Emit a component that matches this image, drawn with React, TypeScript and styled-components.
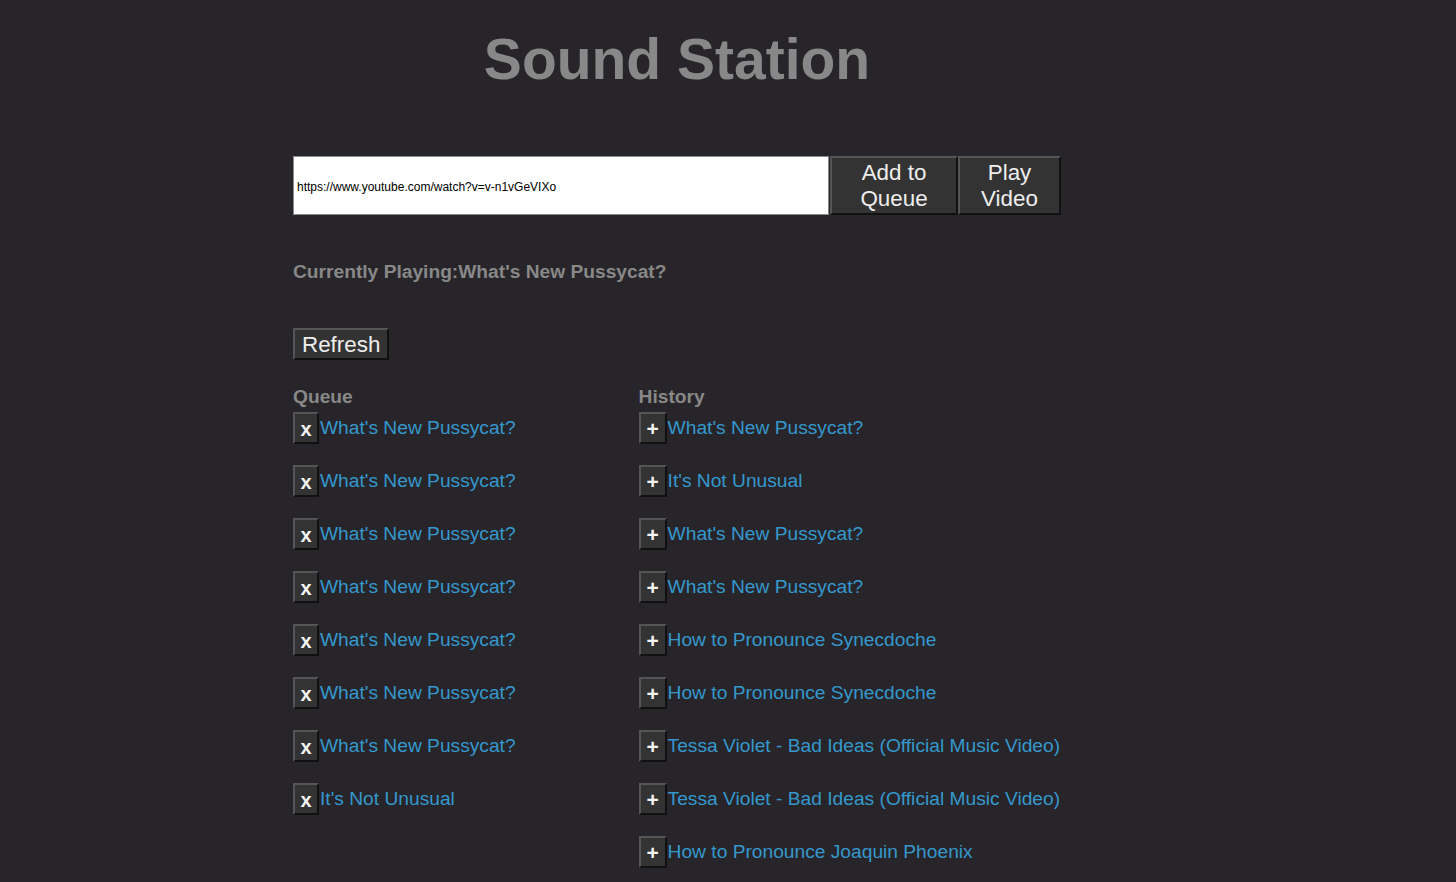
import React from "react";
import styled, { createGlobalStyle } from "styled-components";

const GlobalStyle = createGlobalStyle`
  html, body {
    margin: 0;
    padding: 0;
    background: #272529;
    font-family: "Liberation Sans", Arial, sans-serif;
  }
`;

const Page = styled.div`
  width: 768px;
  margin-left: 293px;
  display: flex;
  flex-direction: column;
`;

const Title = styled.h1`
  margin: 27px 0 0;
  text-align: center;
  font-size: 57px;
  font-weight: bold;
  color: #888888;
  line-height: 64px;
`;

const UrlRow = styled.div`
  display: flex;
  align-items: stretch;
  margin-top: 65px;
  height: 59px;
`;

const UrlInput = styled.input`
  box-sizing: border-box;
  width: 536px;
  height: 59px;
  margin: 0 1px 0 0;
  padding: 2px 3px 0;
  border: 1px solid #8a8a8a;
  background: #ffffff;
  color: #000000;
  font-family: "Liberation Sans", Arial, sans-serif;
  font-size: 12px;
  outline: none;
`;

const Button = styled.button<{ $w?: number }>`
  box-sizing: border-box;
  ${(p) => (p.$w ? `width: ${p.$w}px;` : "")}
  margin: 0;
  padding: 0 6px;
  background: #333333;
  color: #eeeeee;
  border: 2px solid;
  border-color: #555555 #111111 #111111 #555555;
  font-family: "Liberation Sans", Arial, sans-serif;
  font-size: 22.4px;
  line-height: 26px;
  cursor: pointer;
`;

const NowPlaying = styled.div`
  margin-top: 46px;
  font-size: 19.2px;
  line-height: 22px;
  font-weight: bold;
  color: #888888;
`;

const RefreshRow = styled.div`
  margin-top: 45px;
  display: flex;
`;

const RefreshButton = styled(Button)`
  height: 32px;
  padding: 1px 7px 0;
  line-height: 26px;
`;

const Columns = styled.div`
  display: flex;
  margin-top: 26px;
`;

const Column = styled.div<{ $basis: string }>`
  flex: 0 0 ${(p) => p.$basis};
  display: flex;
  flex-direction: column;
`;

const Heading = styled.div`
  font-size: 19.2px;
  line-height: 22px;
  font-weight: bold;
  color: #888888;
  margin-bottom: 4px;
`;

const List = styled.div`
  display: flex;
  flex-direction: column;
  gap: 21px;
`;

const Row = styled.div`
  display: flex;
  align-items: center;
  height: 32px;
`;

const SmallButton = styled(Button)<{ $kind: "remove" | "add" }>`
  height: 32px;
  width: ${(p) => (p.$kind === "add" ? 28 : 26)}px;
  padding: ${(p) => (p.$kind === "add" ? "1px 0 0" : "2px 0 0")};
  font-size: ${(p) => (p.$kind === "add" ? "21px" : "20px")};
  font-weight: bold;
  line-height: 22px;
  color: #f4f4f4;
`;

const Link = styled.a`
  color: #3598cd;
  font-size: 19.2px;
  line-height: 22px;
  text-decoration: none;
  cursor: pointer;
  margin: -1px 0 0 1px;
`;

const queue = [
  "What's New Pussycat?",
  "What's New Pussycat?",
  "What's New Pussycat?",
  "What's New Pussycat?",
  "What's New Pussycat?",
  "What's New Pussycat?",
  "What's New Pussycat?",
  "It's Not Unusual",
];

const history = [
  "What's New Pussycat?",
  "It's Not Unusual",
  "What's New Pussycat?",
  "What's New Pussycat?",
  "How to Pronounce Synecdoche",
  "How to Pronounce Synecdoche",
  "Tessa Violet - Bad Ideas (Official Music Video)",
  "Tessa Violet - Bad Ideas (Official Music Video)",
  "How to Pronounce Joaquin Phoenix",
];

export default function App() {
  return (
    <>
      <GlobalStyle />
      <Page>
        <Title>Sound Station</Title>
        <UrlRow>
          <UrlInput defaultValue="https://www.youtube.com/watch?v=v-n1vGeVIXo" />
          <Button $w={128}>Add to Queue</Button>
          <Button $w={103}>Play Video</Button>
        </UrlRow>
        <NowPlaying>Currently Playing:What's New Pussycat?</NowPlaying>
        <RefreshRow>
          <RefreshButton>Refresh</RefreshButton>
        </RefreshRow>
        <Columns>
          <Column $basis="45%">
            <Heading>Queue</Heading>
            <List>
              {queue.map((t, i) => (
                <Row key={i}>
                  <SmallButton $kind="remove">x</SmallButton>
                  <Link>{t}</Link>
                </Row>
              ))}
            </List>
          </Column>
          <Column $basis="55%">
            <Heading>History</Heading>
            <List>
              {history.map((t, i) => (
                <Row key={i}>
                  <SmallButton $kind="add">+</SmallButton>
                  <Link>{t}</Link>
                </Row>
              ))}
            </List>
          </Column>
        </Columns>
      </Page>
    </>
  );
}
